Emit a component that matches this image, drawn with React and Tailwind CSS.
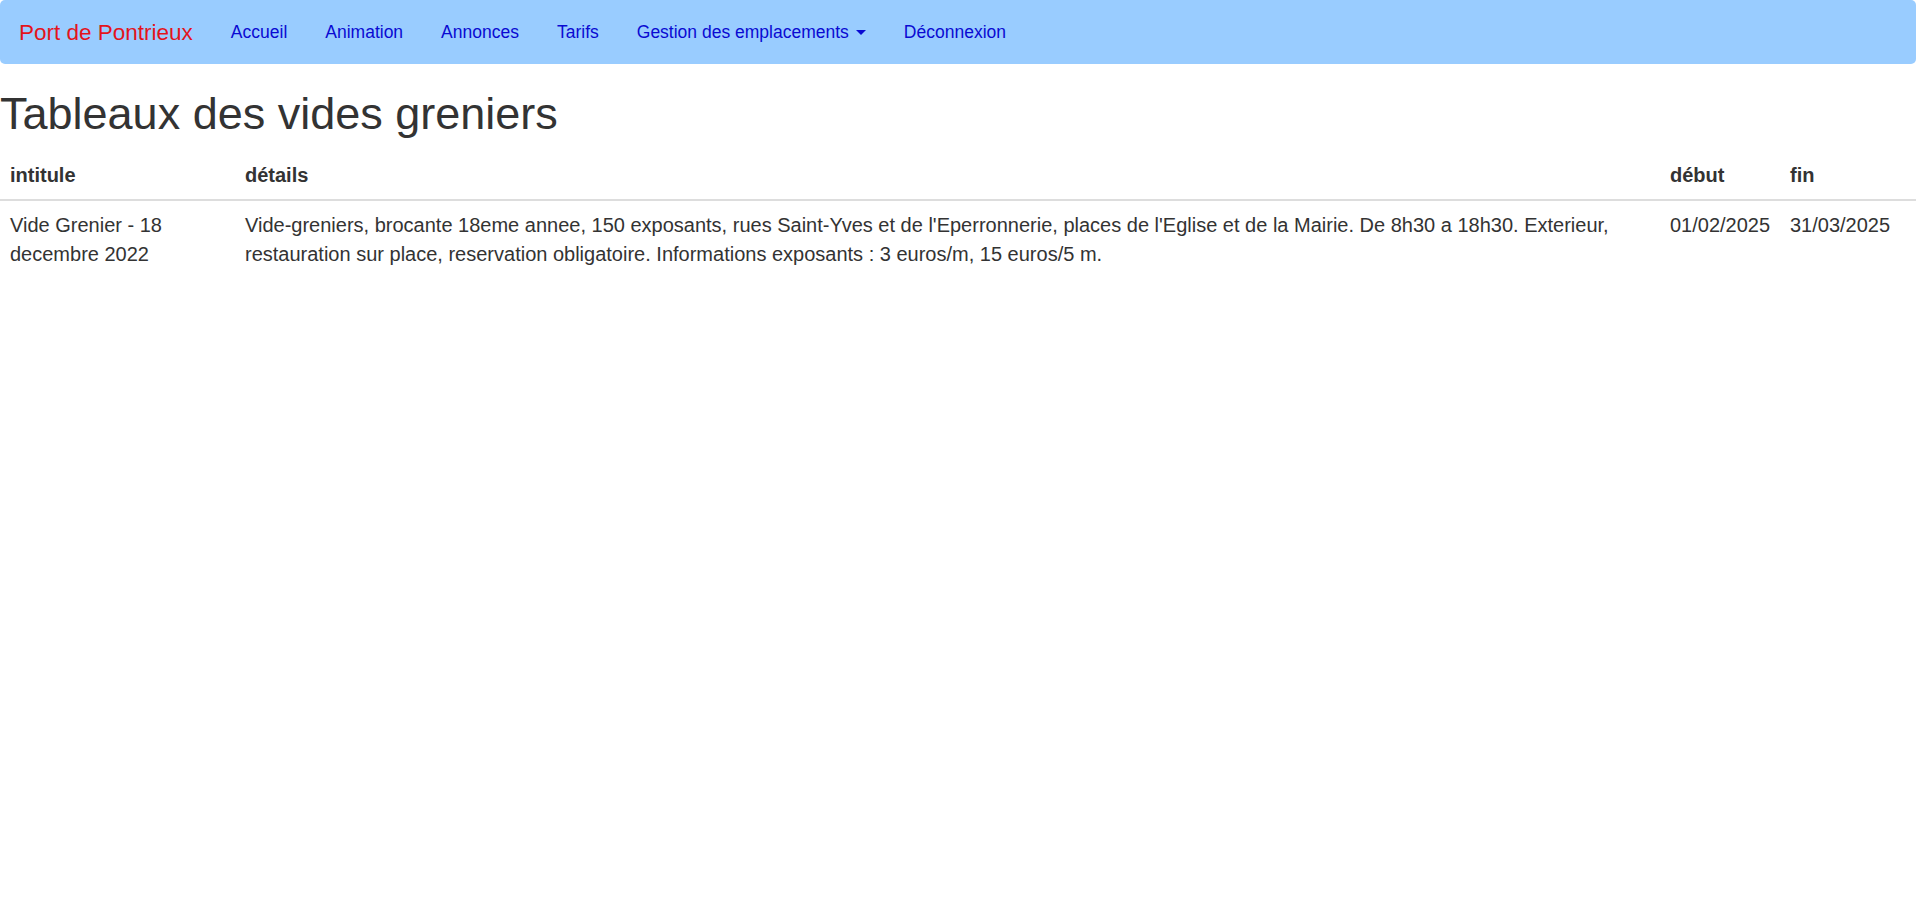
export default function App() {
  const links = ["Accueil", "Animation", "Annonces", "Tarifs"];
  const th = "text-left font-bold px-[10px] py-[10px] border-b-[2px] border-[#ddd] align-bottom";
  const td = "px-[10px] py-[10px] align-top";
  return (
    <div className="min-h-screen bg-white text-[#333] font-['Liberation_Sans',Arial,sans-serif] text-[17.5px] leading-[25px]">
      <nav className="h-[64px] bg-[#99ccff] rounded-[5px] flex items-stretch">
        <a className="pl-[19px] pr-[19px] flex items-center text-[22.5px] text-[#e3141c]">Port de Pontrieux</a>
        <ul className="flex items-stretch">
          {links.map((l) => (
            <li key={l} className="flex">
              <a className="px-[19px] flex items-center text-[#0a0ad2]">{l}</a>
            </li>
          ))}
          <li className="flex">
            <a className="px-[19px] flex items-center text-[#0a0ad2]">
              Gestion des emplacements
              <span className="ml-[7px] inline-block w-0 h-0 border-t-[5px] border-t-[#0a0ad2] border-x-[5px] border-x-transparent"></span>
            </a>
          </li>
          <li className="flex">
            <a className="px-[19px] flex items-center text-[#0a0ad2]">Déconnexion</a>
          </li>
        </ul>
      </nav>
      <h1 className="mt-[25px] mb-[12px] text-[45px] leading-[49.5px] font-medium">Tableaux des vides greniers</h1>
      <table className="w-full table-fixed border-collapse text-[20px] leading-[28.5px]">
        <colgroup>
          <col className="w-[235px]" />
          <col className="w-[1425px]" />
          <col className="w-[120px]" />
          <col />
        </colgroup>
        <thead>
          <tr>
            <th className={th}>intitule</th>
            <th className={th}>détails</th>
            <th className={th}>début</th>
            <th className={th}>fin</th>
          </tr>
        </thead>
        <tbody>
          <tr>
            <td className={td}>Vide Grenier - 18 decembre 2022</td>
            <td className={td}>
              Vide-greniers, brocante 18eme annee, 150 exposants, rues Saint-Yves et de l'Eperronnerie, places de l'Eglise et de la Mairie. De 8h30 a 18h30. Exterieur, restauration sur place, reservation obligatoire. Informations exposants : 3 euros/m, 15 euros/5 m.
            </td>
            <td className={td}>01/02/2025</td>
            <td className={td}>31/03/2025</td>
          </tr>
        </tbody>
      </table>
    </div>
  );
}
